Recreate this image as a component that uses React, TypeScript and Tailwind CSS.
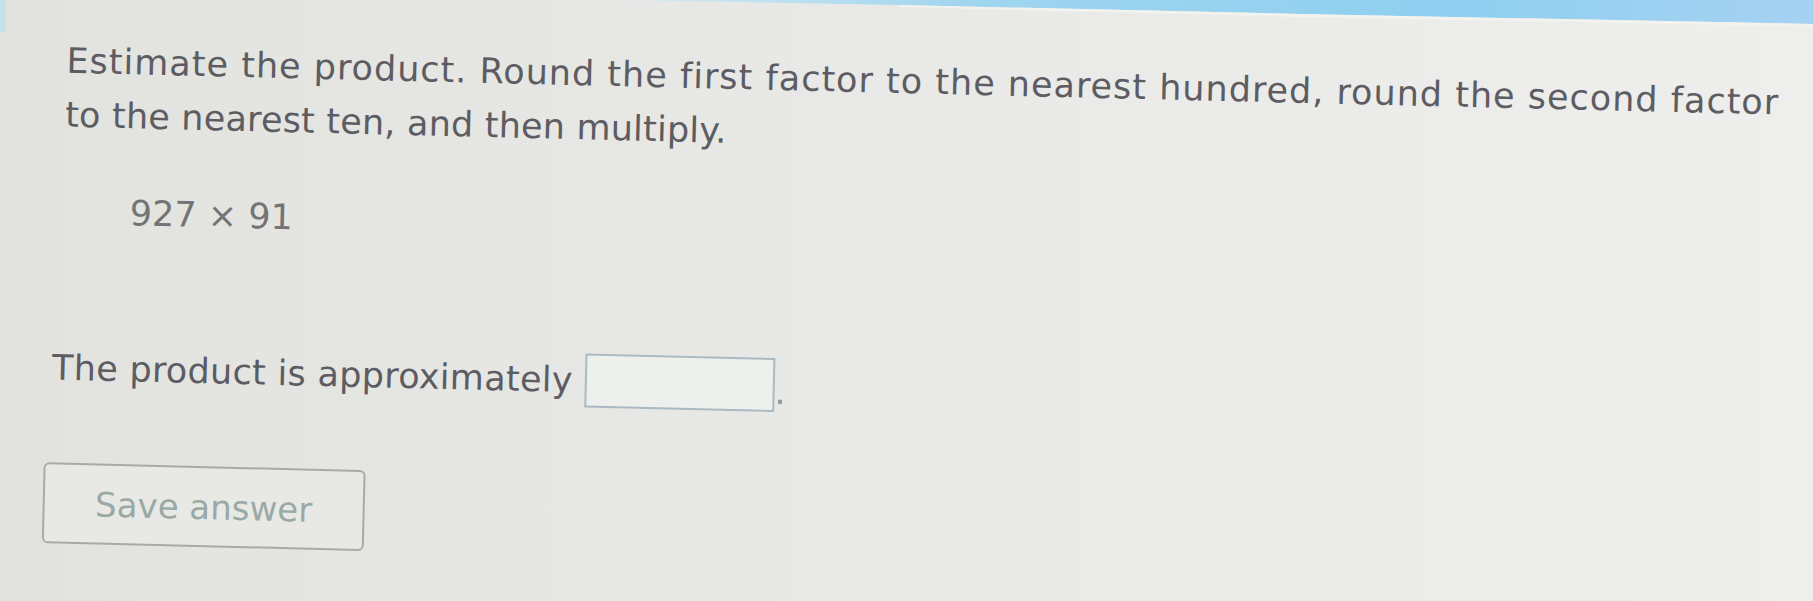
import React from "react";

export default function App() {
  return (
    <div className="relative w-[1813px] h-[601px] overflow-hidden bg-gradient-to-r from-[#e2e3df] via-[#e9eae7] to-[#eeeeec] font-['DejaVu_Sans',sans-serif]">
      {/* Top blue header edge, seen at an angle */}
      <svg
        className="absolute left-0 top-0"
        width="1813"
        height="40"
        viewBox="0 0 1813 40"
      >
        <defs>
          <linearGradient id="hdr" x1="0" x2="1" y1="0" y2="0">
            <stop offset="0" stopColor="#d6e9ef" />
            <stop offset="0.3" stopColor="#9fd5ef" />
            <stop offset="0.7" stopColor="#8fcff0" />
            <stop offset="1" stopColor="#a6d2f2" />
          </linearGradient>
        </defs>
        <polygon points="620,0 1813,0 1813,24 1300,14 900,5" fill="url(#hdr)" />
        <polygon points="900,5 1300,14 1813,24 1813,27 1300,17 900,7" fill="#f2f2ee" />
        <rect x="0" y="0" width="6" height="32" fill="#c5e2e8" />
      </svg>

      {/* Question content, slightly tilted like the photographed screen */}
      <div className="origin-top-left rotate-[1.4deg] pl-[55px] pt-[32px] text-[35px] leading-[54px] text-[#5d5c62]">
        <p className="ml-[13px]">
          <span className="block tracking-[1px]">
            Estimate the product. Round the first factor to the nearest
            hundred, round the second factor
          </span>
          <span className="block tracking-[0.2px]">
            to the nearest ten, and then multiply.
          </span>
        </p>

        <div className="ml-[80px] mt-[43px] text-[#747474]">927 × 91</div>

        <div className="ml-[6px] mt-[102px] flex items-center tracking-[0.3px]">
          <span>The product is approximately</span>
          <span className="ml-[12px] inline-block h-[54px] w-[190px] border-2 border-[#aab9c2] bg-[#eef0ee]" />
          <span className="self-end pb-[2px] text-[#8a9aa0] leading-none">.</span>
        </div>

        <button className="mt-[68px] flex h-[81px] w-[322px] items-center justify-center rounded-[6px] border-2 border-[#a9aaa6] bg-[#e8e9e5] text-[34px] text-[#9aa9a7]">
          Save answer
        </button>
      </div>
    </div>
  );
}
